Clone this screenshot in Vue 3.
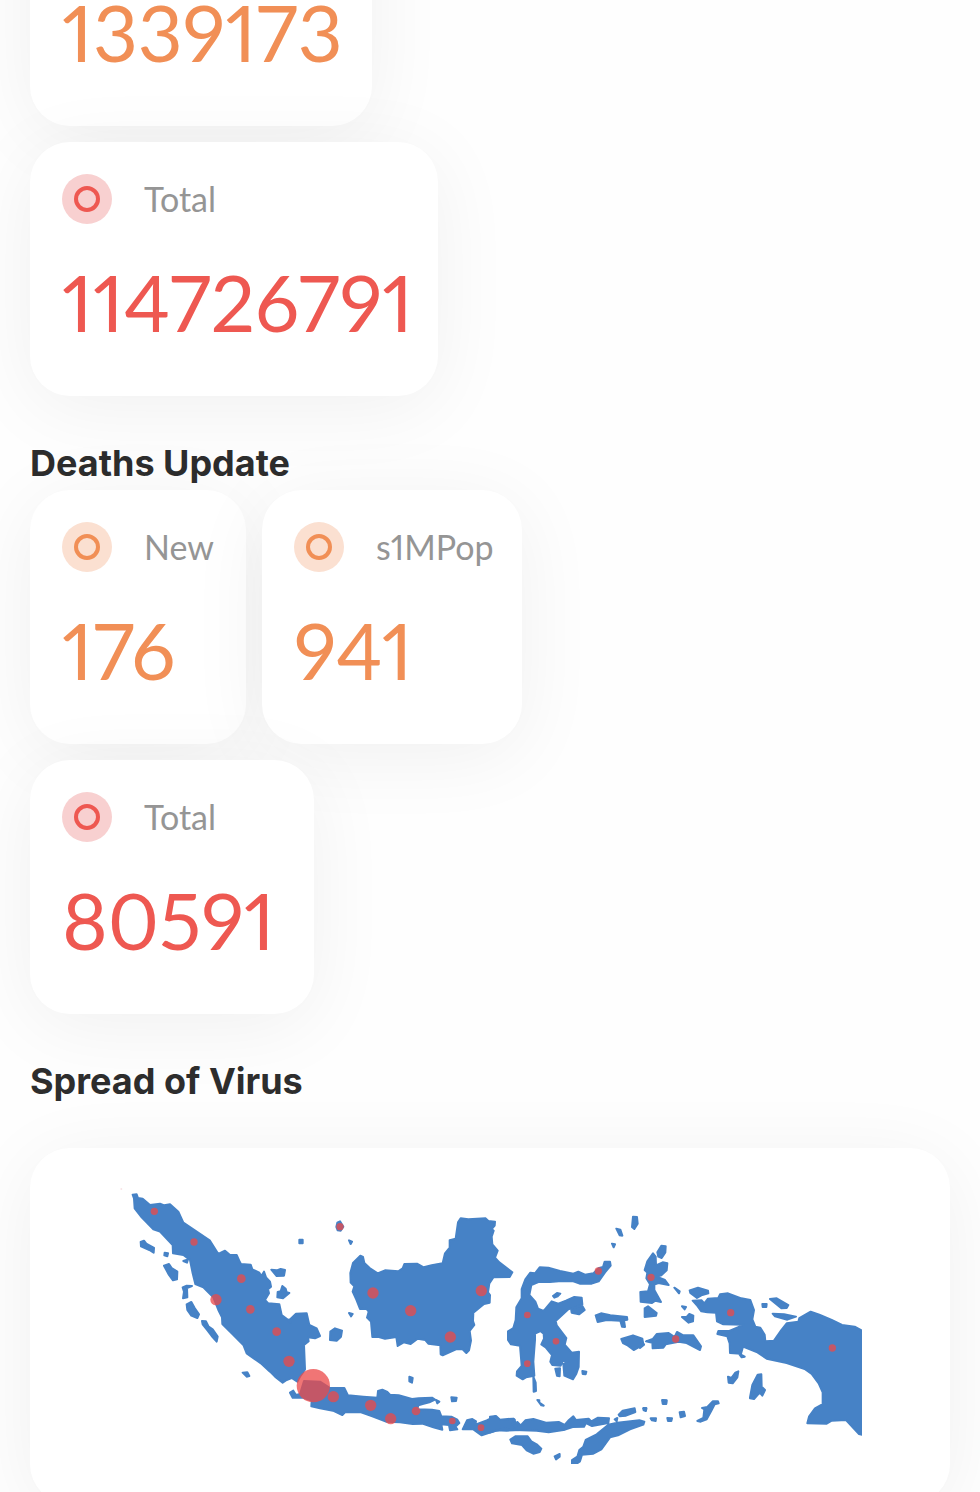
<script setup>
const caseStats = [
  { id: 'case-rate', label: '', value: '1339173', tone: 'orange', size: 'large', clipped: true },
  { id: 'case-total', label: 'Total', value: '114726791', tone: 'red', size: 'wide' },
]

const deathStats = [
  { id: 'death-new', label: 'New', value: '176', tone: 'orange', size: 'small' },
  { id: 'death-pop', label: 's1MPop', value: '941', tone: 'orange', size: 'medium' },
  { id: 'death-total', label: 'Total', value: '80591', tone: 'red', size: 'regular' },
]

const sections = [
  { id: 'cases', title: '', stats: caseStats },
  { id: 'deaths', title: 'Deaths Update', stats: deathStats },
]

// Case markers, in map units: centre x, centre y, radius
const markers = [
  [103, 70, 11], [222, 162, 11], [364, 272, 13], [288, 335, 17], [391, 364, 13],
  [470, 431, 13], [507, 520, 17], [580, 593, 50], [640, 626, 17], [752, 652, 17],
  [812, 692, 17], [888, 669, 13], [997, 699, 10], [1083, 719, 10],
  [660, 116, 11], [759, 315, 17], [872, 368, 17], [991, 447, 17], [1084, 308, 17],
  [1222, 381, 10], [1308, 460, 10], [1222, 527, 10], [1435, 249, 11],
  [1593, 268, 11], [1667, 453, 11], [1832, 374, 11], [2137, 480, 11],
]
</script>

<template>
  <main class="page">
    <section v-for="section in sections" :key="section.id" class="section">
      <h2 v-if="section.title" class="title">{{ section.title }}</h2>
      <div class="cards">
        <article
          v-for="stat in section.stats"
          :key="stat.id"
          class="card"
          :class="[stat.tone, stat.size, { clipped: stat.clipped }]"
        >
          <header v-if="stat.label" class="card-head">
            <span class="badge"><span class="ring"></span></span>
            <span class="label">{{ stat.label }}</span>
          </header>
          <p class="value">{{ stat.value }}</p>
        </article>
      </div>
    </section>

    <section class="section spread">
      <h2 class="title">Spread of Virus</h2>
      <div class="map-card">
        <svg class="map" viewBox="0 0 2226 828" role="img" aria-label="Indonesia">
          <g class="land">
            <!-- Sumatra and its western islands -->
            <g transform="translate(-30 -24)">
              <path d="M68 44L80 43L84 54L98 56L120 75L150 71L163 76L180 73L205 95L220 128L260 155L300 182L325 222L345 212L360 225L380 225L390 247L393 252L422 254L427 268L448 278L454 288L462 275L468 292L480 305L483 320L474 328L477 340L465 360L475 370L508 373L515 405L535 420L545 416L541 428L536 422L558 401L590 400L598 435L620 445L630 468L615 475L594 472L596 484L582 495L585 568L570 590L562 605L545 594L530 600L518 608L495 590L480 575L455 552L410 520L400 495L365 460L337 432L336 412L325 390L310 352L280 322L256 312L248 280L240 240L220 225L189 220L188 195L150 155L130 148L95 112L74 85L72 55Z" />
              <path d="M92 186L102 182L110 192L132 204L131 218L118 210L93 199ZM164 218L174 220L172 229L163 226ZM220 243L234 238L231 248ZM162 257L177 252L185 264L202 275L201 298L189 301L177 285ZM218 322L230 317L246 318L231 324L232 352L219 355L222 335ZM230 373L244 366L254 384L267 403L262 414L244 407L232 390ZM276 423L288 424L296 440L308 448L323 470L320 485L305 468L293 452L278 433Z" />
              <path d="M484 269L500 271L512 267L525 270L522 287L500 288ZM517 318L527 326L530 337L538 339L519 355L502 352L503 336L512 334ZM661 455L675 445L696 452L693 470L680 482L660 480ZM568 179L578 179L578 190L568 190ZM398 578L412 577L418 588L410 590Z" />
            </g>
            <!-- Borneo -->
            <g transform="translate(645 51)">
              <path d="M76 152L84 156L88 174L104 189L128 205L150 196L190 199L203 190L208 177L246 176L266 187L290 181L323 175L330 145L344 128L344 106L362 101L369 52L377 40L400 43L452 40L460 48L480 50L479 62L470 72L476 77L470 95L472 118L488 137L480 158L493 172L532 202L524 216L475 217L463 235L459 262L465 270L464 293L447 297L415 323L414 348L418 360L404 378L408 407L402 436L394 444L382 432L363 433L323 451L317 448L316 421L280 416L271 405L248 401L227 417L206 412L188 423L184 396L150 401L129 395L112 396L108 350L96 338L101 320L94 311L75 312L64 284L53 260L58 244L47 233L46 204L54 174Z" />
              <path d="M42 106L51 110L47 117ZM7 53L15 49L25 65L17 77L8 76L4 66ZM42 324L53 327L48 334Z" />
            </g>
            <!-- Java and the Lesser Sunda chain -->
            <g transform="translate(510 486)">
              <path d="M0 128L10 122L18 135L30 132L42 93L90 95L118 113L163 114L174 136L220 140L262 143L264 123L277 119L292 126L300 134L326 136L366 147L386 145L426 143L435 149L418 157L398 162L385 166L382 178L426 179L448 183L454 199L484 200L502 209L508 219L496 230L502 238L480 241L477 225L454 223L457 239L430 232L397 221L368 222L330 217L288 215L247 199L211 186L165 187L157 195L129 182L90 175L64 169L65 152L38 143L8 143Z" />
              <path d="M358 80L368 84L366 98L358 94ZM438 150L448 155L442 160ZM484 142L500 143L498 153L486 154ZM518 238L531 211L547 207L558 214L556 224L590 211L615 199L628 211L655 211L671 206L680 222L690 226L690 240L650 242L620 241L575 256L548 237Z" />
            </g>
            <g transform="translate(1110 546)">
              <path d="M0 140L18 138L30 149L68 146L74 149L66 162L78 172L82 156L92 166L106 151L130 147L168 158L206 156L224 165L237 150L250 139L258 150L296 146L304 154L324 143L357 145L355 159L306 168L288 159L282 170L248 171L225 179L176 187L140 182L76 180L44 176L15 183L0 188ZM61 209L76 199L113 199L124 214L140 223L154 236L149 246L130 251L110 241L96 225L66 220ZM194 259L209 252L209 260L198 268ZM246 270L262 260L268 240L280 230L287 210L320 193L355 164L382 158L448 151L463 155L460 164L420 178L384 196L360 202L334 238L310 251L276 254L270 274L260 281L246 281ZM374 148L382 144L380 154ZM386 134L398 122L434 115L436 126L408 137L389 139ZM460 114L469 114L468 122L461 121ZM482 145L498 145L497 153L486 151ZM517 90L530 91L529 101L520 102ZM532 144L546 145L544 153L534 153ZM569 127L582 125L585 138L572 142ZM622 153L640 144L643 118L636 114L652 111L668 94L684 94L686 100L674 103L664 122L650 148L632 155ZM714 20L724 24L736 8L745 4L742 22L728 40L716 38ZM780 82L787 45L803 14L814 13L815 50L825 60L817 77L809 68L792 87L780 85ZM130 20L137 38L138 63L131 65ZM142 90L148 91L148 98L161 107L154 106Z" />
            </g>
            <!-- Sulawesi and North Maluku -->
            <g transform="translate(1125 51)">
              <path d="M134 187L160 188L195 198L235 206L250 200L270 209L295 205L310 190L324 186L329 170L345 170L347 182L330 202L311 229L290 236L254 236L235 229L200 228L165 231L130 231L109 240L103 270L121 290L129 311L146 318L170 289L190 296L213 287L238 276L260 278L262 298L220 313L182 348L185 361L214 399L209 419L230 443L252 440L251 486L244 506L234 523L208 512L205 477L220 468L203 468L197 482L172 480L166 470L171 450L152 427L139 418L147 401L146 386L136 378L120 386L120 405L115 470L118 512L93 517L83 523L65 512L66 499L80 483L75 422L48 418L39 405L39 379L55 369L62 345L64 307L80 280L80 252L91 223L106 203L120 205Z" />
              <path d="M174 273L186 264L196 266L188 274L178 278ZM228 310L262 303L269 315L252 328L230 323ZM181 491L195 490L194 514L186 512ZM262 498L274 500L272 508L263 507ZM414 35L426 36L428 56L418 72L411 66ZM364 71L376 74L382 92L374 91ZM351 116L360 118L356 127ZM302 331L318 325L346 331L396 336L397 344L387 346L390 366L381 365L376 347L335 345L308 351ZM379 402L414 391L442 401L445 419L416 435L396 420L384 414Z" />
            </g>
            <!-- Maluku and Papua -->
            <g transform="translate(1560 126)">
              <path d="M52 67L64 47L77 49L76 67L65 84L55 80ZM22 94L39 70L47 80L48 106L68 97L82 100L80 121L64 136L50 140L75 150L86 165L55 159L43 164L43 180L63 216L46 212L36 219L2 215L1 186L24 184L30 163L19 145L22 128L14 120ZM14 235L24 229L50 249L48 257L14 261ZM103 173L119 184L117 190ZM149 181L174 173L204 182L205 190L184 196L171 204L151 189ZM126 229L138 231L134 238ZM126 261L140 261L148 252L160 257L159 274L146 278ZM158 212L185 211L193 220L204 206L235 204L240 193L264 190L304 205L331 210L342 240L337 268L346 290L361 293L374 314L376 334L402 332L424 300L440 280L475 275L478 264L512 245L538 254L575 270L606 285L644 290L666 302L666 614L657 612L618 570L575 572L560 581L502 580L507 560L525 535L548 522L548 487L536 460L515 432L494 417L440 399L380 386L350 366L309 350L303 371L270 369L269 340L262 319L232 312L235 303L268 303L300 289L312 284L250 283L231 274L228 248L202 247L184 244L170 225ZM296 370L314 380L305 382ZM18 334L38 327L50 312L86 309L104 321L111 306L130 316L160 316L183 349L180 360L140 339L116 335L77 343L70 353L38 355L37 338ZM0 326L12 344L0 354ZM367 222L380 222L379 231L368 231ZM390 207L410 205L445 225L440 234L424 235ZM398 251L432 253L468 260L442 269L405 259ZM67 511L79 512L78 522L68 521ZM10 536L19 536L17 543Z" />
            </g>
          </g>
          <circle class="speck" cx="4" cy="3" r="3" />
          <circle
            v-for="([x, y, r], index) in markers"
            :key="index"
            class="marker"
            :cx="x"
            :cy="y"
            :r="r"
          />
        </svg>
      </div>
    </section>
  </main>
</template>

<style>
body {
  margin: 0;
  background: #fefefe;
}
</style>

<style scoped>
.page {
  height: 100vh;
  overflow: hidden;
  padding: 0 30px;
  box-sizing: border-box;
  display: flow-root;
  font-family: Lato, 'Open Sans', sans-serif;
  font-variant-numeric: proportional-nums;
  color: #2d2d2d;
}

.section {
  margin-bottom: 40px;
}

.title {
  margin: 0;
  font-family: Inter, 'Open Sans', sans-serif;
  font-size: 36px;
  line-height: 54px;
  font-weight: 700;
}

.cards {
  display: flex;
  flex-wrap: wrap;
  gap: 16px;
  max-width: 560px;
}

.card {
  box-sizing: border-box;
  height: 254px;
  padding: 32px;
  border-radius: 40px;
  background: #fff;
  box-shadow: 0 12px 80px rgba(0, 0, 0, 0.06);
}

.clipped {
  display: flex;
  align-items: flex-end;
  margin-top: -128px;
}

.small {
  width: 216px;
}

.medium {
  width: 260px;
}

.regular {
  width: 284px;
}

.large {
  width: 342px;
}

.wide {
  width: 408px;
}

.card-head {
  display: flex;
  align-items: center;
  gap: 32px;
  height: 50px;
}

.badge {
  display: flex;
  flex: none;
  align-items: center;
  justify-content: center;
  width: 50px;
  height: 50px;
  border-radius: 50%;
}

.ring {
  width: 18px;
  height: 18px;
  border: 4px solid currentColor;
  border-radius: 50%;
}

.label {
  font-size: 34px;
  line-height: 50px;
  color: #959595;
}

.value {
  margin: 20px 0 4px;
  font-size: 78px;
  line-height: 116px;
}

.orange .badge,
.orange .value {
  color: #f18f56;
}

.orange .badge {
  background: #fbe0d1;
}

.red .badge,
.red .value {
  color: #ee5851;
}

.red .badge {
  background: #f8d0d0;
}

.map-card {
  display: flex;
  justify-content: center;
  align-items: flex-start;
  box-sizing: border-box;
  height: 356px;
  margin-top: 40px;
  padding: 40px 88px 40px 90px;
  border-radius: 40px;
  background: #fff;
  box-shadow: 0 12px 80px rgba(0, 0, 0, 0.06);
}

.map {
  display: block;
  width: 100%;
}

.land {
  fill: #4682c6;
  stroke: #4682c6;
  stroke-width: 6;
  stroke-linejoin: round;
}

.marker {
  fill: #eb4a49;
  fill-opacity: 0.76;
}

.speck {
  fill: #f8e4e6;
}
</style>
